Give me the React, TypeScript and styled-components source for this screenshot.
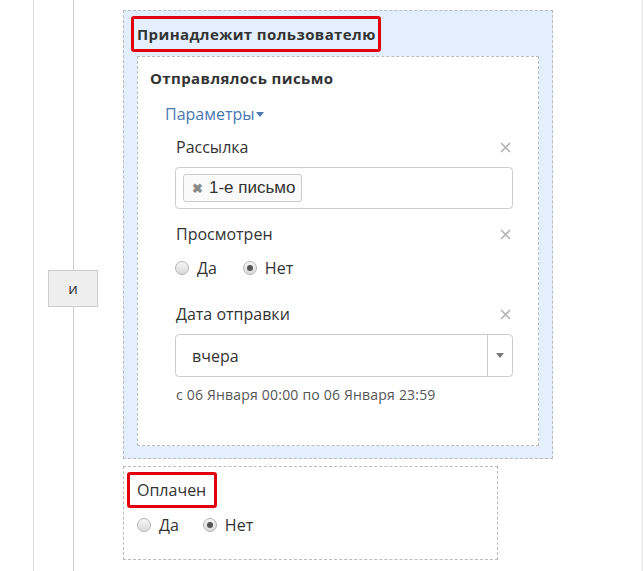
import styled, { createGlobalStyle } from "styled-components";

const GlobalStyle = createGlobalStyle`
  html, body {
    margin: 0;
    padding: 0;
    background: #fff;
  }
  body {
    font-family: "Open Sans", "Noto Sans", sans-serif;
    color: #333;
  }
`;

const Page = styled.div`
  display: flex;
  width: 643px;
  height: 571px;
  box-sizing: border-box;
  padding-left: 33px;
  border-right: 2px solid #eeeeee;
  overflow: hidden;
`;

const Rail = styled.div`
  display: flex;
  border-left: 1px solid #dddddd;
`;

const Connector = styled.div`
  width: 78px;
  display: flex;
  flex-direction: column;
  justify-content: center;
  align-items: center;
  background: linear-gradient(#cccccc, #cccccc) no-repeat 39px 0 / 1px 100%;
`;

const AndBox = styled.div`
  width: 48px;
  height: 35px;
  margin-top: 5px;
  display: flex;
  align-items: center;
  justify-content: center;
  background: #eeeeee;
  border: 1px solid #cccccc;
  font-size: 15px;
  color: #333;
`;

const Conditions = styled.div`
  display: flex;
  flex-direction: column;
  gap: 7px;
  padding-top: 10px;
  margin-left: 11px;
`;

const Group = styled.div<{ $tinted?: boolean; $width: number }>`
  width: ${(p) => p.$width}px;
  box-sizing: border-box;
  border: 1px dashed #bbbbbb;
  background: ${(p) => (p.$tinted ? "#e3effc" : "#ffffff")};
  display: flex;
  flex-direction: column;
  align-items: flex-start;
`;

const OuterGroup = styled(Group)`
  padding: 5px 13px 12px 13px;
`;

const PlainGroup = styled(Group)`
  height: 94px;
  padding: 5px 13px 0 3px;
`;

const Marked = styled.span`
  display: inline-block;
  border: 3px solid #e2000f;
  border-radius: 3px;
  line-height: 20px;
  color: #333;
  white-space: nowrap;
`;

const GroupTitle = styled(Marked)`
  margin-left: -6px;
  padding: 5px 2px 5px 3px;
  font-size: 15px;
  font-weight: 700;
  letter-spacing: 0.4px;
`;

const PaidTitle = styled(Marked)`
  padding: 5px 8px 5px 7px;
  font-size: 16px;
`;

const InnerBox = styled.div`
  align-self: stretch;
  margin-top: 4px;
  height: 390px;
  box-sizing: border-box;
  background: #fff;
  border: 1px dashed #bbbbbb;
  padding: 11px 25px 0 12px;
`;

const BoxTitle = styled.div`
  font-size: 15px;
  line-height: 20px;
  font-weight: 700;
  letter-spacing: 0.4px;
  color: #333;
`;

const ParamsLink = styled.div`
  margin: 16px 0 0 15px;
  font-size: 16px;
  line-height: 20px;
  color: #4878b0;
  display: flex;
  align-items: center;
  gap: 1px;
`;

const Caret = styled.span`
  width: 0;
  height: 0;
  border-left: 4px solid transparent;
  border-right: 4px solid transparent;
  border-top: 5px solid #4878b0;
`;

const Fields = styled.div`
  margin-left: 25px;
  display: flex;
  flex-direction: column;
`;

const Field = styled.div<{ $top: number }>`
  margin-top: ${(p) => p.$top}px;
  display: flex;
  flex-direction: column;
`;

const FieldHead = styled.div`
  display: flex;
  align-items: center;
  justify-content: space-between;
  padding-left: 1px;
  padding-right: 2px;
  font-size: 16px;
  line-height: 20px;
  color: #333;
`;

const Control = styled.div`
  margin-top: 10px;
  height: 42px;
  box-sizing: border-box;
  border: 1px solid #cccccc;
  border-radius: 4px;
  background: #fff;
  display: flex;
  align-items: center;
`;

const TagInput = styled(Control)`
  padding-left: 7px;
`;

const Tag = styled.div`
  height: 28px;
  box-sizing: border-box;
  display: flex;
  align-items: center;
  gap: 6px;
  padding: 0 5px 0 8px;
  border: 1px solid #cccccc;
  border-radius: 3px;
  background: #fafafa;
  font-family: "Liberation Sans", Arial, sans-serif;
  font-size: 17px;
  color: #333;
`;

const TagRemove = styled.span`
  font-size: 13px;
  font-weight: 700;
  color: #8a8a8a;
`;

const SelectBox = styled(Control)`
  justify-content: space-between;
  height: 43px;
`;

const SelectValue = styled.span`
  padding-left: 16px;
  font-size: 16px;
  color: #333;
`;

const SelectArrow = styled.div`
  width: 24px;
  align-self: stretch;
  border-left: 1px solid #cccccc;
  display: flex;
  align-items: center;
  justify-content: center;
  &::after {
    content: "";
    border-left: 4px solid transparent;
    border-right: 4px solid transparent;
    border-top: 5px solid #777;
  }
`;

const Hint = styled.div`
  margin-top: 9px;
  padding-left: 1px;
  font-size: 14px;
  line-height: 18px;
  letter-spacing: 0.2px;
  color: #555;
`;

const RadioRow = styled.div<{ $top: number; $gap: number }>`
  margin-top: ${(p) => p.$top}px;
  display: flex;
  align-items: center;
  gap: ${(p) => p.$gap}px;
`;

const RadioOption = styled.label`
  display: flex;
  align-items: center;
  gap: 8px;
  font-size: 16px;
  line-height: 20px;
  color: #333;
`;

const RadioDot = styled.span<{ $checked?: boolean }>`
  width: 14px;
  height: 14px;
  box-sizing: border-box;
  border-radius: 50%;
  border: 1px solid #b5b5b5;
  background: linear-gradient(#f6f6f6, #d9d9d9);
  display: flex;
  align-items: center;
  justify-content: center;
  &::after {
    content: "";
    display: ${(p) => (p.$checked ? "block" : "none")};
    width: 6px;
    height: 6px;
    border-radius: 50%;
    background: #555;
  }
`;

const PaidBody = styled.div`
  padding-left: 10px;
`;

const CloseIcon = () => (
  <svg width="11" height="11" viewBox="0 0 11 11">
    <path d="M1 1L10 10M10 1L1 10" stroke="#b3b3b3" strokeWidth="1.6" />
  </svg>
);

const Radios = ({
  checked,
  top,
  gap,
}: {
  checked: "yes" | "no";
  top: number;
  gap: number;
}) => (
  <RadioRow $top={top} $gap={gap}>
    <RadioOption>
      <RadioDot $checked={checked === "yes"} />
      Да
    </RadioOption>
    <RadioOption>
      <RadioDot $checked={checked === "no"} />
      Нет
    </RadioOption>
  </RadioRow>
);

export default function App() {
  return (
    <>
      <GlobalStyle />
      <Page>
        <Rail>
          <Connector>
            <AndBox>и</AndBox>
          </Connector>
          <Conditions>
            <OuterGroup $tinted $width={430}>
              <GroupTitle>Принадлежит пользователю</GroupTitle>
              <InnerBox>
                <BoxTitle>Отправлялось письмо</BoxTitle>
                <ParamsLink>
                  Параметры
                  <Caret />
                </ParamsLink>
                <Fields>
                  <Field $top={13}>
                    <FieldHead>
                      Рассылка
                      <CloseIcon />
                    </FieldHead>
                    <TagInput>
                      <Tag>
                        <TagRemove>✖</TagRemove>
                        1-е письмо
                      </Tag>
                    </TagInput>
                  </Field>
                  <Field $top={15}>
                    <FieldHead>
                      Просмотрен
                      <CloseIcon />
                    </FieldHead>
                    <Radios checked="no" top={14} gap={26} />
                  </Field>
                  <Field $top={26}>
                    <FieldHead>
                      Дата отправки
                      <CloseIcon />
                    </FieldHead>
                    <SelectBox>
                      <SelectValue>вчера</SelectValue>
                      <SelectArrow />
                    </SelectBox>
                    <Hint>с 06 Января 00:00 по 06 Января 23:59</Hint>
                  </Field>
                </Fields>
              </InnerBox>
            </OuterGroup>
            <PlainGroup $width={375}>
              <PaidTitle>Оплачен</PaidTitle>
              <PaidBody>
                <Radios checked="no" top={7} gap={24} />
              </PaidBody>
            </PlainGroup>
          </Conditions>
        </Rail>
      </Page>
    </>
  );
}
